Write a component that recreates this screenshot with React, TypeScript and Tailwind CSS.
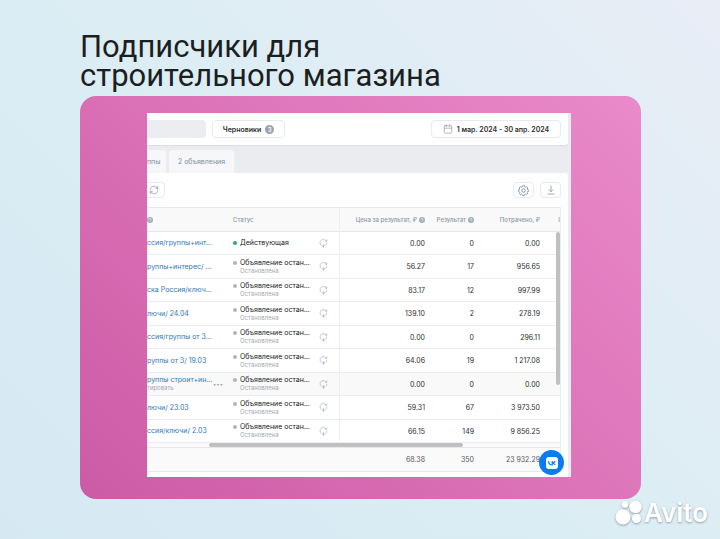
import { Calendar, RefreshCw } from "lucide-react";

interface AdRow {
  name: string;
  action?: string;
  active?: boolean;
  cost: string;
  result: string;
  spent: string;
}

const rows: AdRow[] = [
  { name: "ссия/группы+инт...", active: true, cost: "0.00", result: "0", spent: "0.00" },
  { name: "руппы+интерес/ ...", cost: "56.27", result: "17", spent: "956.65" },
  { name: "ска Россия/ключ...", cost: "83.17", result: "12", spent: "997.99" },
  { name: "лючи/ 24.04", cost: "139.10", result: "2", spent: "278.19" },
  { name: "ссия/группы от 3...", cost: "0.00", result: "0", spent: "296.11" },
  { name: "руппы от 3/ 19.03", cost: "64.06", result: "19", spent: "1 217.08" },
  { name: "руппы строит+ин...", action: "тировать", cost: "0.00", result: "0", spent: "0.00" },
  { name: "лючи/ 23.03", cost: "59.31", result: "67", spent: "3 973.50" },
  { name: "ссия/ключи/ 2.03", cost: "66.15", result: "149", spent: "9 856.25" },
];

const HelpDot = () => (
  <svg viewBox="0 0 12 12" className="inline-block size-[6px] shrink-0" aria-hidden="true">
    <circle cx="6" cy="6" r="6" fill="#a3adb8" />
    <path d="M4.2 4.7c0-2.4 3.7-2.3 3.7 0 0 1.3-1.8 1.4-1.8 2.8M6.1 8.8v.9" fill="none" stroke="#fff" strokeWidth="1.2" />
  </svg>
);

const GearIcon = () => (
  <svg viewBox="0 0 20 20" className="size-[11px]" fill="none" stroke="#8393a5" strokeWidth="1.7" strokeLinejoin="round" aria-hidden="true">
    <path d="M8.3 1.500h3.400l.6 1.900 1.300.600 1.900-.9 2.200 2.300-.9 1.900.6 1.200 1.600.500v2.500l-1.600.700-.6 1.300.9 1.900-2.200 2.200-1.900-.9-1.300.600-.6 1.700H8.300l-.6-1.700-1.300-.600-1.900.9-2.200-2.200.9-1.900-.6-1.300-1.600-.700V9l1.600-.500.6-1.200-.9-1.900 2.200-2.300 1.900.9 1.300-.600z" />
    <circle cx="10" cy="10" r="3.200" />
  </svg>
);

const DownloadIcon = () => (
  <svg viewBox="0 0 20 20" className="size-[10px]" fill="none" stroke="#8f99a5" strokeWidth="1.7" strokeLinecap="round" aria-hidden="true">
    <path d="M10 2v11M6 9.500l4 4 4-4M4 18h12" />
  </svg>
);

// Open circular arrow with a small pointer at its foot
const ForecastIcon = () => (
  <svg viewBox="0 0 20 20" className="size-[9px]" fill="none" stroke="#a5b0bd" strokeWidth="1.500" strokeLinecap="round" strokeLinejoin="round" aria-hidden="true">
    <path d="M4.500 14A7.500 7.500 0 1 1 16 4.500M17.500 2V5h-3M17.300 9a7.500 7.500 0 0 1-1.800 5" />
    <path d="M10 12v6M7.500 14.500L10 18.500l2.500-4" />
  </svg>
);

const TopBar = () => (
  <div className="flex h-8 items-center rounded-br-[3px] bg-white pr-[7px] shadow-[0_1px_1px_#dcdde2]">
    <input aria-label="Поиск" className="h-[18px] w-[59px] rounded-r-[4px] bg-[#ebedf0] outline-none" />
    <button type="button" className="ml-[6px] flex h-[18px] w-[73px] items-center justify-center gap-1 rounded-[4px] border border-[#e9eaee] font-semibold">
      Черновики
      <span className="flex size-[9px] items-center justify-center rounded-full bg-[#99a2ad] text-[6px] text-white">3</span>
    </button>
    <button type="button" className="ml-auto flex h-[18px] w-[130px] items-center justify-center gap-1 rounded-[4px] border border-[#e9eaee] font-semibold">
      <Calendar className="size-[10px] text-[#99a2ad]" strokeWidth={1.8} />
      1 мар. 2024 - 30 апр. 2024
    </button>
  </div>
);

const Tabs = () => (
  <div className="flex h-7 items-end gap-[3px] text-[#7f8fa1]">
    <button type="button" className="h-[23px] w-[19px] rounded-tr-[4px] bg-[#f7f7f9] text-left">ппы</button>
    <button type="button" className="h-[23px] w-[65px] rounded-t-[4px] bg-[#f7f7f9] text-center">2 объявления</button>
  </div>
);

const Toolbar = () => (
  <div className="flex h-[34px] items-center pr-[7px]">
    <button type="button" aria-label="Обновить" className="flex h-4 w-[18px] items-center rounded-r-[4px] border border-l-0 border-[#e9eaee] pl-[2px]">
      <RefreshCw className="size-[10px] text-[#8f99a5]" strokeWidth={1.8} />
    </button>
    <button type="button" aria-label="Настройки" className="ml-auto flex h-4 w-[21px] items-center justify-center rounded-[4px] border border-[#e9eaee]">
      <GearIcon />
    </button>
    <button type="button" aria-label="Скачать" className="ml-[6px] flex h-4 w-[21px] items-center justify-center rounded-[4px] border border-[#e9eaee]">
      <DownloadIcon />
    </button>
  </div>
);

const AdsTable = () => (
  <div className="relative mr-[7px] border-r border-[#ebecef]">
    <table className="w-full table-fixed border-collapse">
      <colgroup>
        <col className="w-[86px]" />
        <col className="w-[82px]" />
        <col className="w-[24px]" />
        <col />
        <col className="w-[49px]" />
        <col className="w-[66px]" />
        <col className="w-[20px]" />
      </colgroup>
      <thead>
        <tr className="h-6 border-y border-[#e7e8ec] bg-[#f9f9fa] text-[6px] text-[#8b96a3]">
          <th className="text-left font-normal"><HelpDot /></th>
          <th className="text-left font-medium">Статус</th>
          <th className="border-r border-[#eeeff2]" />
          <th className="font-medium">
            <span className="flex items-center justify-end gap-[2px] whitespace-nowrap">Цена за результат, ₽ <HelpDot /></span>
          </th>
          <th className="font-medium">
            <span className="flex items-center justify-end gap-[2px] whitespace-nowrap">Результат <HelpDot /></span>
          </th>
          <th className="text-right font-medium">Потрачено, ₽</th>
          <th className="overflow-hidden text-right font-medium">I</th>
        </tr>
      </thead>
      <tbody>
        {rows.map((row, i) => (
          <tr
            key={i}
            className={`border-b border-[#ebecef] odd:h-[23px] even:h-6 ${row.action ? "bg-[#f9f9fa]" : ""}`}
          >
            <td className="p-0">
              <div className="flex items-center">
                <div className="flex w-[66px] flex-col leading-[8px]">
                  <a href="#ad" className="whitespace-nowrap text-[#2f78b5]">{row.name}</a>
                  {row.action && <a href="#edit" className="text-[6px] text-[#a0a8b2]">{row.action}</a>}
                </div>
                {row.action && <button type="button" aria-label="Ещё" className="text-[10px] leading-[8px] font-bold text-[#8f99a5]">···</button>}
              </div>
            </td>
            <td className="p-0">
              <div className="flex gap-[3px] whitespace-nowrap leading-[8px]">
                <span className={`mt-[2px] size-1 shrink-0 rounded-full ${row.active ? "bg-[#2fad61]" : "bg-[#b0b4ba]"}`} />
                <div>
                  <p className="text-[#18191b]">{row.active ? "Действующая" : "Объявление остан..."}</p>
                  {!row.active && <p className="text-[6px] text-[#a0a8b2]">Остановлена</p>}
                </div>
              </div>
            </td>
            <td className="border-r border-[#eeeff2] p-0 pl-1"><ForecastIcon /></td>
            <td className="p-0 text-right">{row.cost}</td>
            <td className="p-0 text-right">{row.result}</td>
            <td className="p-0 text-right">{row.spent}</td>
            <td />
          </tr>
        ))}
      </tbody>
      <tfoot>
        <tr className="h-[5px] bg-[#fafafb]"><td colSpan={7} className="p-0" /></tr>
        <tr className="h-6 border-y border-[#e7e8ec] bg-[#fafafb] text-[#55585d]">
          <td colSpan={3} />
          <td className="p-0 text-right">68.38</td>
          <td className="p-0 text-right">350</td>
          <td className="p-0 text-right">23 932.29</td>
          <td />
        </tr>
      </tfoot>
    </table>
    {/* Scrollbars */}
    <div className="absolute top-[25px] right-0 h-[153px] w-1 rounded-full bg-[#c0c0c1]" />
    <div className="absolute right-[97px] bottom-[25px] left-[62px] h-1 rounded-full bg-[#c0c0c1]" />
  </div>
);

const AvitoMark = () => (
  <div className="absolute right-3 bottom-3 flex items-center gap-px text-white drop-shadow-[0_1px_1px_rgba(90,110,125,0.6)]">
    <svg viewBox="0 0 28 26" className="h-[26px] w-7" fill="#fff" aria-hidden="true">
      <circle cx="10" cy="4.500" r="3.200" />
      <circle cx="20.500" cy="7" r="6.200" />
      <circle cx="8" cy="17" r="7.500" />
      <circle cx="21.500" cy="18.500" r="4.500" />
    </svg>
    <span className="font-[Inter,sans-serif] text-[26px] leading-[28px] font-semibold">Avito</span>
  </div>
);

export default function App() {
  return (
    <main className="relative min-h-screen bg-[linear-gradient(45deg,#d5e9f3_0%,#dcedf4_50%,#e8edf6_100%)] pt-8 pr-[79px] pb-10 pl-20 font-[Inter,sans-serif]">
      <h1 className="font-[Roboto,sans-serif] text-[31px] leading-[29px] text-[#1c1f22]">
        Подписчики для
        <br />
        строительного магазина
      </h1>
      <section className="mt-[6px] rounded-2xl bg-[linear-gradient(45deg,#cc5ba5_0%,#dc72b7_50%,#e98aca_100%)] pt-[17px] pr-[70px] pb-[22px] pl-[67px]">
        <div className="relative overflow-hidden bg-[#ebecef] pr-[3px] text-[7px] leading-[9px] text-[#2b2d30]">
          <TopBar />
          <Tabs />
          <div className="rounded-tr-[3px] bg-white pb-[5px]">
            <Toolbar />
            <AdsTable />
          </div>
          <button type="button" aria-label="VK" className="absolute right-[7px] bottom-[2px] flex size-[25px] items-center justify-center rounded-full bg-[#0a7cf0]">
            <svg viewBox="0 0 24 24" className="size-3" aria-hidden="true">
              <rect width="24" height="24" rx="6" fill="#fff" />
              <path d="M5 8c.2 5 2.700 8 7.300 8h.2V8M12.500 12c3-.2 5-2 5.700-4M12.500 12c3 .3 5 2 6 4" fill="none" stroke="#0a7cf0" strokeWidth="2.400" />
            </svg>
          </button>
        </div>
      </section>
      <AvitoMark />
    </main>
  );
}
